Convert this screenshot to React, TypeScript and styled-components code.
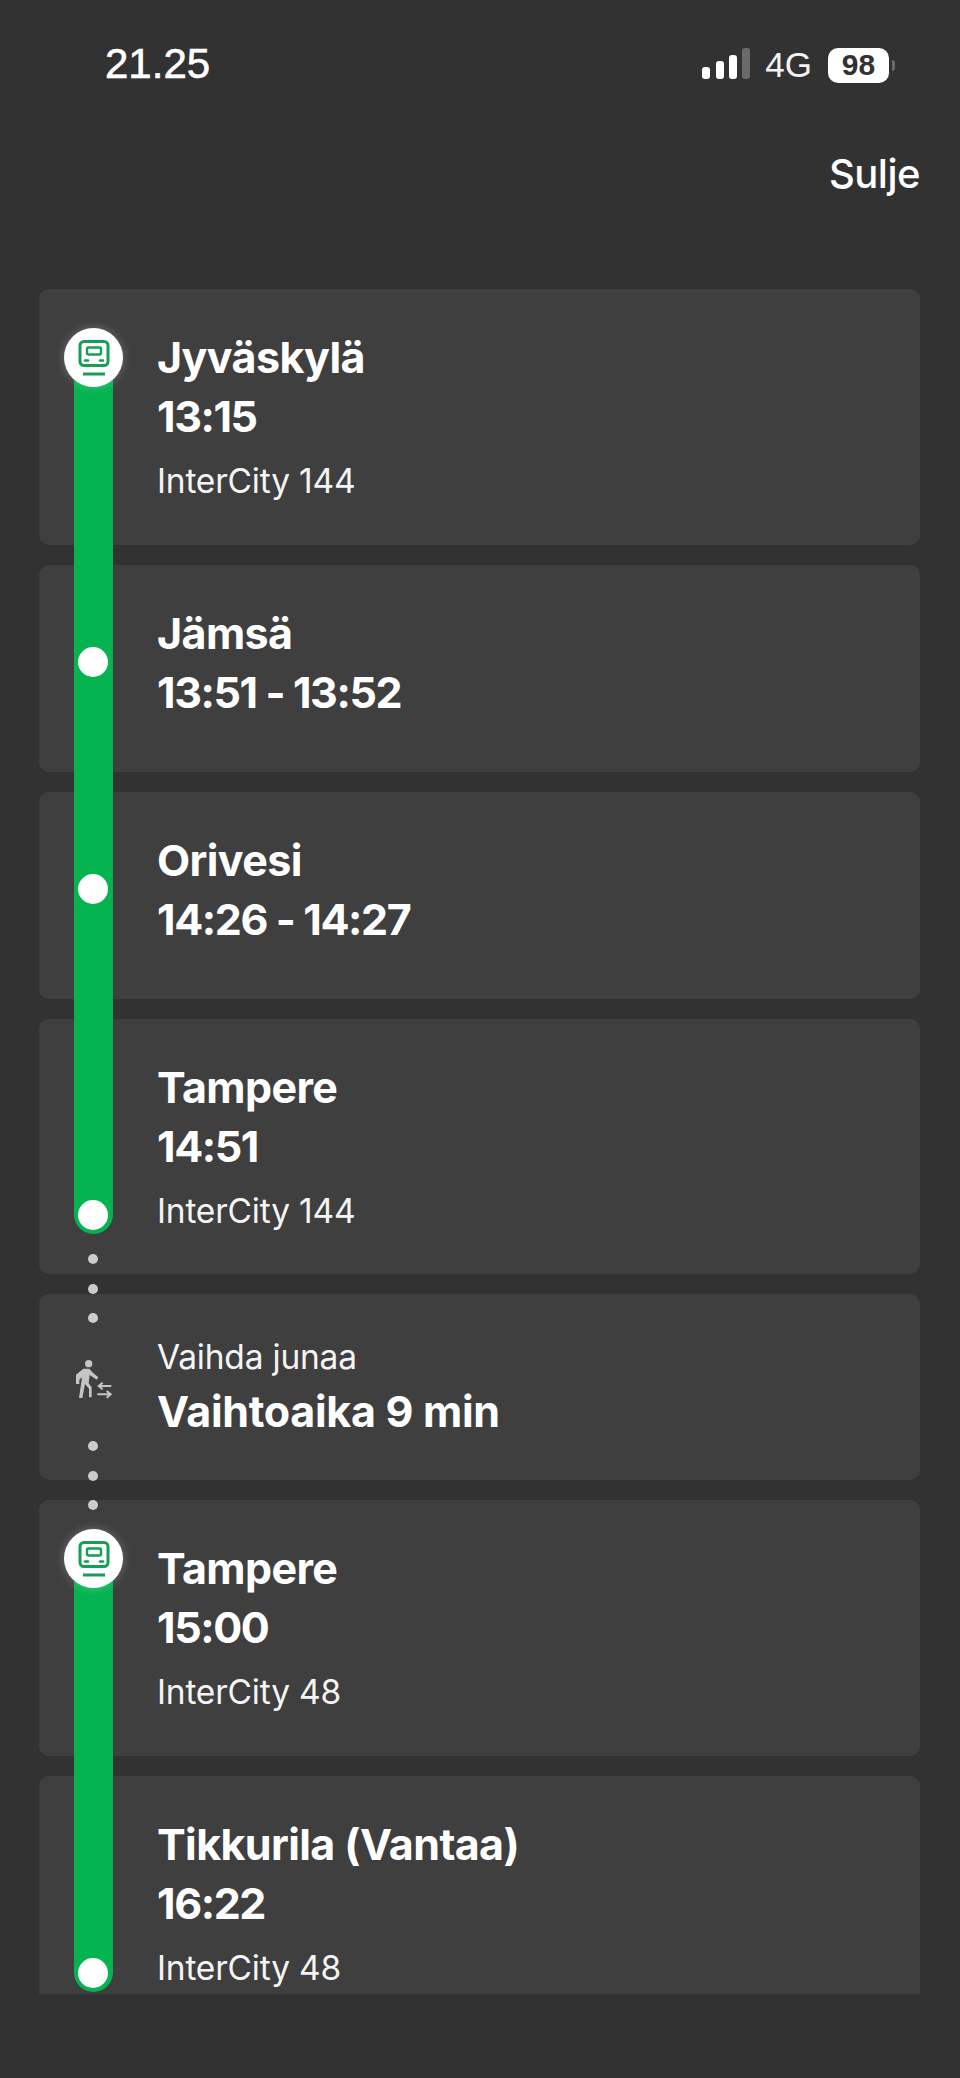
import React from "react";
import styled, { createGlobalStyle } from "styled-components";

const GlobalStyle = createGlobalStyle`
  html, body {
    margin: 0;
    padding: 0;
    background: #323232;
  }
  body {
    font-family: Inter, "Liberation Sans", sans-serif;
    color: #fff;
    -webkit-font-smoothing: antialiased;
  }
`;

const TrainIcon = () => (
  <svg width="34" height="38" viewBox="0 0 34 38" fill="none">
    <rect x="3" y="2.5" width="28" height="24" rx="4" stroke="#139f54" strokeWidth="3" />
    <rect x="10" y="8.5" width="14" height="7" rx="1.2" stroke="#139f54" strokeWidth="2.4" />
    <path d="M8 21.5h3M23 21.5h3" stroke="#139f54" strokeWidth="2.6" strokeLinecap="round" />
    <path d="M6 35h22" stroke="#139f54" strokeWidth="3" />
  </svg>
);

const TransferIcon = () => (
  <svg width="56" height="56" viewBox="0 0 168 168" fill="#c4c4c4">
    <circle cx="68" cy="41" r="11" />
    <path d="M52 56h18l9 11 18 15-5 7-21-14-3 25 9 12v30H69v-26L57 102l-8 42H39l9-62-8 7v13h-10V74z" />
    <g stroke="#c4c4c4" strokeWidth="6" fill="none">
      <path d="M136 108H98M110 98l-12 10 12 10" />
      <path d="M94 133h40M122 123l12 10-12 10" />
    </g>
  </svg>
);

type LegStop = {
  name: string;
  time: string;
  train?: string;
  marker: "train" | "dot" | "end";
};

const firstLeg: LegStop[] = [
  { name: "Jyväskylä", time: "13:15", train: "InterCity 144", marker: "train" },
  { name: "Jämsä", time: "13:51 - 13:52", marker: "dot" },
  { name: "Orivesi", time: "14:26 - 14:27", marker: "dot" },
  { name: "Tampere", time: "14:51", train: "InterCity 144", marker: "end" },
];

const secondLeg: LegStop[] = [
  { name: "Tampere", time: "15:00", train: "InterCity 48", marker: "train" },
  { name: "Tikkurila (Vantaa)", time: "16:22", train: "InterCity 48", marker: "end" },
];

const renderStop = (stop: LegStop, clipped: boolean, badgeTop: number) => (
  <Card key={stop.name + stop.time} $clipped={clipped} $tall={!!stop.train}>
    {stop.marker === "train" && (
      <TrainBadge $top={badgeTop}>
        <TrainIcon />
      </TrainBadge>
    )}
    {stop.marker === "dot" && <MidDot />}
    {stop.marker === "end" && <EndDot $bottom={clipped ? 6 : 44} />}
    <Station>{stop.name}</Station>
    <Time>{stop.time}</Time>
    {stop.train && <TrainName>{stop.train}</TrainName>}
  </Card>
);

export default function App() {
  return (
    <Screen>
      <GlobalStyle />
      <StatusBar>
        <Clock>21.25</Clock>
        <StatusIcons>
          <Signal>
            <Bar $h={12} />
            <Bar $h={18} />
            <Bar $h={24} />
            <Bar $h={31} $off />
          </Signal>
          <Network>4G</Network>
          <Battery>98</Battery>
          <BatteryNub />
        </StatusIcons>
      </StatusBar>

      <Header>
        <CloseLink>Sulje</CloseLink>
      </Header>

      <Timeline>
        <Leg>
          <Rail />
          {firstLeg.map((s) => renderStop(s, false, 39))}
        </Leg>

        <TransferCard>
          <Dots $where="top">
            <i />
            <i />
            <i />
          </Dots>
          <TransferGlyph>
            <TransferIcon />
          </TransferGlyph>
          <TransferLabel>Vaihda junaa</TransferLabel>
          <TransferTime>Vaihtoaika 9 min</TransferTime>
          <Dots $where="bottom">
            <i />
            <i />
            <i />
          </Dots>
        </TransferCard>

        <Leg>
          <Rail $last />
          {secondLeg.map((s, i) => renderStop(s, i === 1, 29))}
        </Leg>
      </Timeline>
    </Screen>
  );
}

const Screen = styled.div`
  width: 960px;
  height: 2078px;
  overflow: hidden;
  background: #323232;
`;

const StatusBar = styled.div`
  height: 130px;
  padding: 0 65px 0 105px;
  display: flex;
  align-items: center;
  justify-content: space-between;
`;

const Clock = styled.div`
  font-family: "Liberation Sans", Arial, sans-serif;
  font-size: 42px;
  -webkit-text-stroke: 0.6px #fff;
  margin-top: -2px;
`;

const StatusIcons = styled.div`
  display: flex;
  align-items: center;
`;

const Signal = styled.div`
  display: flex;
  align-items: flex-end;
  gap: 5.3px;
  height: 31px;
  margin-right: 15px;
  margin-top: -3px;
`;

const Bar = styled.span<{ $h: number; $off?: boolean }>`
  width: 8px;
  height: ${(p) => p.$h}px;
  border-radius: 3px;
  background: ${(p) => (p.$off ? "#6a6a6a" : "#fff")};
`;

const Network = styled.span`
  font-family: "Liberation Sans", Arial, sans-serif;
  font-size: 35px;
  color: #f4f4f4;
  margin-right: 16px;
`;

const Battery = styled.span`
  width: 61px;
  height: 35px;
  border-radius: 10px;
  background: #fff;
  color: #323232;
  font-family: "Liberation Sans", Arial, sans-serif;
  font-size: 30px;
  font-weight: 700;
  display: flex;
  align-items: center;
  justify-content: center;
`;

const BatteryNub = styled.span`
  width: 3px;
  height: 11px;
  margin-left: 3px;
  border-radius: 0 3px 3px 0;
  background: #6a6a6a;
`;

const Header = styled.div`
  height: 159px;
  padding: 0 40px 0 0;
  display: flex;
  justify-content: flex-end;
  align-items: flex-start;
`;

const CloseLink = styled.span`
  font-size: 40px;
  font-weight: 500;
  line-height: 88px;
  letter-spacing: -0.5px;
`;

const Timeline = styled.div`
  margin: 0 40px 0 39px;
  display: flex;
  flex-direction: column;
  gap: 20px;
`;

const Leg = styled.div`
  position: relative;
  display: flex;
  flex-direction: column;
  gap: 20px;
`;

const Rail = styled.div<{ $last?: boolean }>`
  position: absolute;
  z-index: 1;
  left: 35px;
  width: 39px;
  top: 60px;
  bottom: ${(p) => (p.$last ? "2px" : "40px")};
  background: #05b351;
  border-radius: 0 0 20px 20px;
`;

const Card = styled.div<{ $clipped?: boolean; $tall?: boolean }>`
  position: relative;
  box-sizing: border-box;
  height: ${(p) => (p.$clipped ? "218.5px" : p.$tall ? "255.5px" : "207px")};
  padding: 39px 0 0 118px;
  background: #3f3f3f;
  border-radius: ${(p) => (p.$clipped ? "10px 10px 0 0" : "10px")};
`;

const Station = styled.div`
  font-size: 43px;
  font-weight: 650;
  line-height: 59px;
  letter-spacing: -0.6px;
`;

const Time = styled.div`
  font-size: 43px;
  font-weight: 650;
  line-height: 59px;
  letter-spacing: -1.4px;
`;

const TrainName = styled.div`
  font-size: 33.5px;
  line-height: 40px;
  margin-top: 15px;
  letter-spacing: -0.2px;
  color: #f4f4f4;
`;

const TrainBadge = styled.div<{ $top: number }>`
  position: absolute;
  z-index: 2;
  left: 25px;
  top: ${(p) => p.$top}px;
  width: 59px;
  height: 59px;
  border-radius: 50%;
  background: #fff;
  box-shadow: 0 0 10px rgba(255, 255, 255, 0.25);
  display: flex;
  align-items: center;
  justify-content: center;
`;

const MidDot = styled.div`
  position: absolute;
  z-index: 2;
  left: 39px;
  top: 82px;
  width: 30px;
  height: 30px;
  border-radius: 50%;
  background: #fff;
`;

const EndDot = styled.div<{ $bottom: number }>`
  position: absolute;
  z-index: 2;
  left: 39px;
  bottom: ${(p) => p.$bottom}px;
  width: 30px;
  height: 30px;
  border-radius: 50%;
  background: #fff;
`;

const TransferCard = styled.div`
  position: relative;
  box-sizing: border-box;
  height: 186px;
  padding: 43px 0 0 118px;
  background: #3f3f3f;
  border-radius: 10px;
`;

const Dots = styled.div<{ $where: "top" | "bottom" }>`
  position: absolute;
  z-index: 3;
  left: 49px;
  ${(p) => (p.$where === "top" ? "top: -40px;" : "bottom: -30px;")}
  display: flex;
  flex-direction: column;
  gap: 19.5px;

  i {
    display: block;
    width: 10px;
    height: 10px;
    border-radius: 50%;
    background: #cccccc;
  }
`;

const TransferGlyph = styled.div`
  position: absolute;
  left: 27px;
  top: 56px;
  line-height: 0;
`;

const TransferLabel = styled.div`
  font-size: 33.5px;
  line-height: 40px;
  letter-spacing: -0.2px;
  color: #f4f4f4;
`;

const TransferTime = styled.div`
  font-size: 43px;
  font-weight: 700;
  line-height: 59px;
  margin-top: 5px;
  letter-spacing: -0.3px;
`;
